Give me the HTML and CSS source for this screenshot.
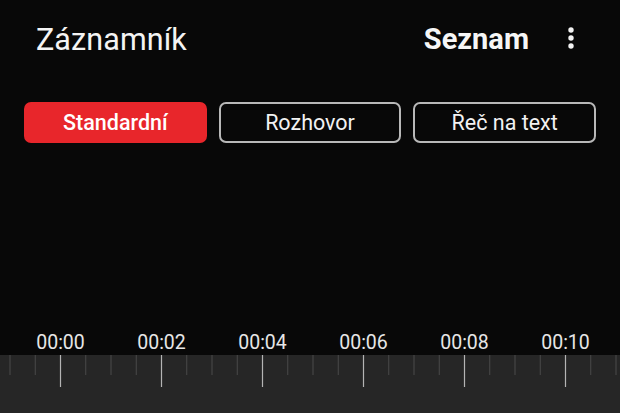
FILE: index.html
```html
<!DOCTYPE html>
<html lang="cs">
<head>
<meta charset="utf-8">
<title>Záznamník</title>
<link rel="stylesheet" href="styles.css">
</head>
<body>
<div class="app">
  <header class="top">
    <h1 class="title">Záznamník</h1>
    <span class="list">Seznam</span>
    <svg class="more" width="12" height="28" viewBox="0 0 12 28" aria-label="Více">
      <circle cx="6" cy="4" r="2.7" fill="#f2f2f2"/>
      <circle cx="6" cy="12" r="2.7" fill="#f2f2f2"/>
      <circle cx="6" cy="20" r="2.7" fill="#f2f2f2"/>
    </svg>
  </header>
  <nav class="modes">
    <button class="mode active">Standardní</button>
    <button class="mode">Rozhovor</button>
    <button class="mode">Řeč na text</button>
  </nav>
  <div class="spacer"></div>
  <div class="labels">
    <span class="label">00:00</span>
    <span class="label">00:02</span>
    <span class="label">00:04</span>
    <span class="label">00:06</span>
    <span class="label">00:08</span>
    <span class="label">00:10</span>
  </div>
  <div class="band">
    <svg class="ticks" width="620" height="58" viewBox="0 0 620 58">
      <g stroke="#4a4a4a" stroke-width="1">
        <line x1="10" y1="0" x2="10" y2="20"/>
        <line x1="35.25" y1="0" x2="35.25" y2="20"/>
        <line x1="85.75" y1="0" x2="85.75" y2="20"/>
        <line x1="111" y1="0" x2="111" y2="20"/>
        <line x1="136.25" y1="0" x2="136.25" y2="20"/>
        <line x1="186.75" y1="0" x2="186.75" y2="20"/>
        <line x1="212" y1="0" x2="212" y2="20"/>
        <line x1="237.25" y1="0" x2="237.25" y2="20"/>
        <line x1="287.75" y1="0" x2="287.75" y2="20"/>
        <line x1="313" y1="0" x2="313" y2="20"/>
        <line x1="338.25" y1="0" x2="338.25" y2="20"/>
        <line x1="388.75" y1="0" x2="388.75" y2="20"/>
        <line x1="414" y1="0" x2="414" y2="20"/>
        <line x1="439.25" y1="0" x2="439.25" y2="20"/>
        <line x1="489.75" y1="0" x2="489.75" y2="20"/>
        <line x1="515" y1="0" x2="515" y2="20"/>
        <line x1="540.25" y1="0" x2="540.25" y2="20"/>
        <line x1="590.75" y1="0" x2="590.75" y2="20"/>
        <line x1="616" y1="0" x2="616" y2="20"/>
      </g>
      <g stroke="#b4b4b4" stroke-width="1.2">
        <line x1="60.5" y1="0" x2="60.5" y2="32"/>
        <line x1="161.5" y1="0" x2="161.5" y2="32"/>
        <line x1="262.5" y1="0" x2="262.5" y2="32"/>
        <line x1="363.5" y1="0" x2="363.5" y2="32"/>
        <line x1="464.5" y1="0" x2="464.5" y2="32"/>
        <line x1="565.5" y1="0" x2="565.5" y2="32"/>
      </g>
    </svg>
  </div>
</div>
</body>
</html>
```
FILE: styles.css
```css
* { box-sizing: border-box; }
html, body {
  margin: 0;
  padding: 0;
  background: #080808;
}
body {
  font-family: Roboto, "Noto Sans", "Liberation Sans", sans-serif;
  color: #f2f2f2;
  width: 620px;
  height: 413px;
  overflow: hidden;
}
.app {
  display: flex;
  flex-direction: column;
  height: 413px;
}
.top {
  display: flex;
  align-items: center;
  height: 78px;
  padding: 0 0 0 36px;
}
.title {
  margin: 0;
  flex: 1;
  font-size: 30.5px;
  font-weight: 400;
  letter-spacing: 0.1px;
  color: #f4f4f4;
}
.list {
  font-size: 29px;
  font-weight: 700;
  color: #f6f6f6;
  margin-right: 36px;
}
.more {
  display: block;
  margin-right: 43px;
  margin-top: 2px;
}
.modes {
  display: flex;
  gap: 12px;
  padding: 0 24px;
  margin-top: 24px;
}
.mode {
  flex: 1;
  height: 41px;
  border-radius: 7px;
  border: 2px solid #b8b8b8;
  background: #080808;
  color: #f2f2f2;
  font-family: inherit;
  font-size: 21.5px;
  font-weight: 400;
  padding: 0;
}
.mode.active {
  background: #e8262b;
  border-color: #e8262b;
  font-weight: 500;
  color: #ffffff;
}
.spacer { flex: 1; }
.labels {
  display: flex;
  padding-left: 10px;
  padding-top: 7px;
  height: 30px;
  align-items: flex-start;
}
.label {
  width: 101px;
  text-align: center;
  font-size: 19.5px;
  color: #e6e6e6;
  line-height: 22px;
}
.band {
  height: 58px;
  background: #262626;
}
.ticks { display: block; }
```
